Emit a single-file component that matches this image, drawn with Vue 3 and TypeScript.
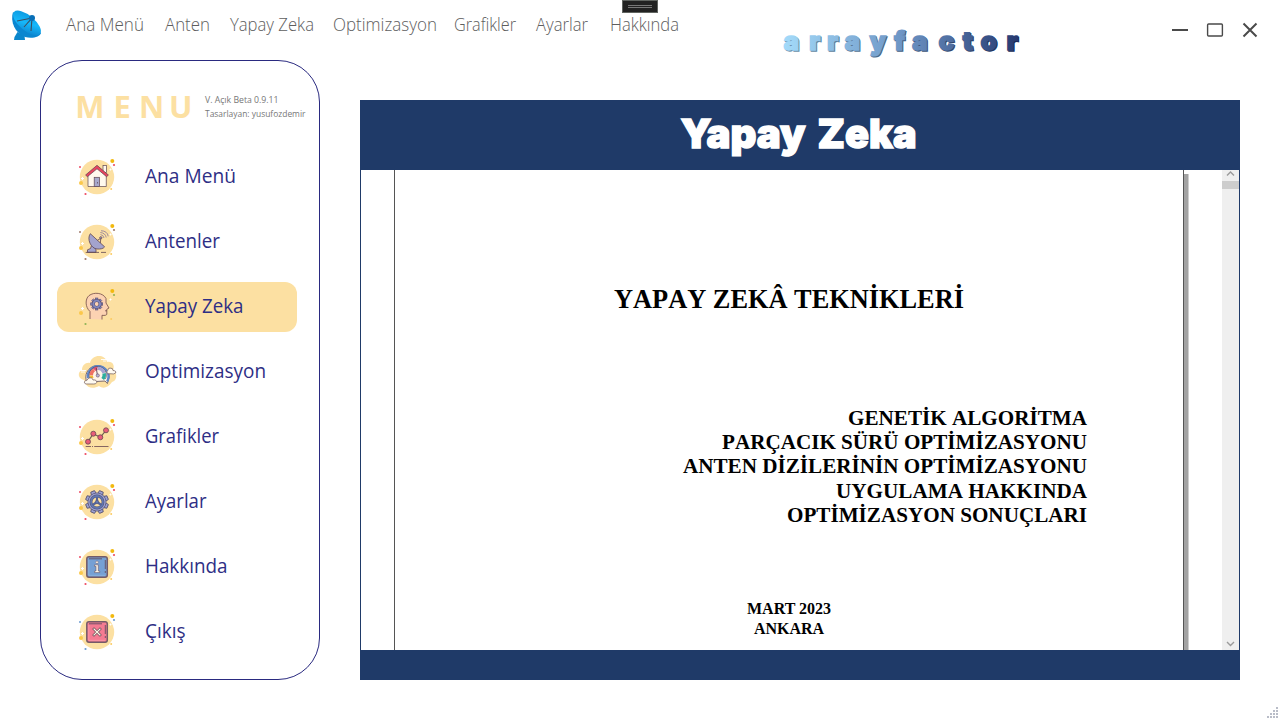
<script setup lang="ts">
interface NavItem { label: string; width: number; text: number }
interface MenuItem { label: string; icon: string; accent: string; text: number }

const nav: NavItem[] = [
  { label: 'Ana Menü', width: 99, text: 78 },
  { label: 'Anten', width: 65, text: 45 },
  { label: 'Yapay Zeka', width: 103, text: 84 },
  { label: 'Optimizasyon', width: 121, text: 104 },
  { label: 'Grafikler', width: 82.4, text: 62 },
  { label: 'Ayarlar', width: 74, text: 52 },
  { label: 'Hakkında', width: 80, text: 69 },
]

const menu: MenuItem[] = [
  { label: 'Ana Menü', icon: 'home', accent: '#ee4b63', text: 91 },
  { label: 'Antenler', icon: 'dish', accent: '#a27c6c', text: 75 },
  { label: 'Yapay Zeka', icon: 'head', accent: '#8fb355', text: 98.5 },
  { label: 'Optimizasyon', icon: 'gauge', accent: '', text: 121 },
  { label: 'Grafikler', icon: 'chart', accent: '#ee4b63', text: 74 },
  { label: 'Ayarlar', icon: 'gear', accent: '#ee4b63', text: 61.5 },
  { label: 'Hakkında', icon: 'info', accent: '#ee4b63', text: 82.5 },
  { label: 'Çıkış', icon: 'close', accent: '#6c9bd2', text: 40.5 },
]
const active = 'head'

const lines: { label: string; text: number }[] = [
  { label: 'GENETİK ALGORİTMA', text: 239 },
  { label: 'PARÇACIK SÜRÜ OPTİMİZASYONU', text: 365 },
  { label: 'ANTEN DİZİLERİNİN OPTİMİZASYONU', text: 404 },
  { label: 'UYGULAMA HAKKINDA', text: 251 },
  { label: 'OPTİMİZASYON SONUÇLARI', text: 300 },
]

const teeth = [0, 45, 90, 135, 180, 225, 270, 315]
const gripDots = [[9, 0], [6, 3], [9, 3], [3, 6], [6, 6], [9, 6], [0, 9], [3, 9], [6, 9], [9, 9]]
</script>

<template>
  <div class="window">
    <header class="topbar">
      <svg class="logo" viewBox="0 0 32 32">
        <defs>
          <linearGradient id="dishFill" x1="0" y1="0" x2="1" y2="1">
            <stop offset="0" stop-color="#0a8fd8" /><stop offset=".5" stop-color="#16b8fa" /><stop offset="1" stop-color="#0a78c4" />
          </linearGradient>
        </defs>
        <path d="M6.5 22 L3.5 27 L3 30 H14 L13.5 26Z" fill="#0a86cc" />
        <path d="M2 2 C-1 12 4 23 14 27 C21 29 29 27 30 23Z" fill="#0a86d0" />
        <ellipse cx="16" cy="13" rx="17" ry="7.6" transform="rotate(40 16 13)" fill="url(#dishFill)" />
        <path d="M6 11 L21 8 L13 17 M21 8 L20 21" fill="none" stroke="#3f4c5e" stroke-width="1.1" />
        <circle cx="21" cy="8" r="3" fill="#086fb7" />
      </svg>
      <nav class="nav">
        <span v-for="n in nav" :key="n.label" :style="{ width: n.width + 'px' }">
          <svg :width="n.width" height="30"><text x="0" y="20.5" :textLength="n.text" lengthAdjust="spacingAndGlyphs">{{ n.label }}</text></svg>
        </span>
      </nav>
      <div class="debug-tab"><i></i><i></i></div>
      <svg class="brand" viewBox="0 0 250 40" width="250" height="40">
        <defs>
          <linearGradient id="brandFill" gradientUnits="userSpaceOnUse" x1="4" y1="0" x2="240" y2="0">
            <stop offset="0" stop-color="#a3daf9" /><stop offset=".5" stop-color="#6d95c5" /><stop offset="1" stop-color="#25386f" />
          </linearGradient>
          <linearGradient id="brandEdge" gradientUnits="userSpaceOnUse" x1="4" y1="0" x2="240" y2="0">
            <stop offset="0" stop-color="#6c92ad" /><stop offset="1" stop-color="#172653" />
          </linearGradient>
        </defs>
        <text class="edge" x="4.5 30 48 65.5 90.5 115 133 159.5 183.5 201.5 227.5" y="27">arrayfactor</text>
        <text class="face" x="3.5 29 47 64.5 89.5 114 132 158.5 182.5 200.5 226.5" y="26">arrayfactor</text>
      </svg>
      <div class="controls">
        <svg viewBox="0 0 100 30" width="100" height="30" fill="none" stroke="#4a4a4a" stroke-width="2">
          <path d="M7 15 H23" />
          <rect x="42.6" y="9" width="14.8" height="12" rx="1" stroke-width="1.4" />
          <path d="M78.5 8.5 L91.5 21.5 M91.5 8.5 L78.5 21.5" />
        </svg>
      </div>
    </header>

    <main class="body">
      <aside class="sidebar">
        <div class="side-head">
          <svg class="menu-word" width="125" height="40"><text x="-0.8 37.5 63 93" y="28">MENU</text></svg>
          <svg class="version" width="112" height="30">
            <text x="0" y="9" textLength="73.5" lengthAdjust="spacingAndGlyphs">V. Açık Beta 0.9.11</text>
            <text x="0" y="23" textLength="100.5" lengthAdjust="spacingAndGlyphs">Tasarlayan: yusufozdemir</text>
          </svg>
        </div>
        <ul class="menu">
          <li v-for="m in menu" :key="m.icon" :class="{ active: m.icon === active }">
            <svg class="icon" viewBox="0 0 40 40">
              <template v-if="m.icon !== 'gauge'">
                <circle cx="20" cy="20" r="17.2" fill="#fce0a2" />
                <circle cx="35.3" cy="4" r="2" fill="#f2b90f" />
                <circle cx="4" cy="26" r="2" fill="#fbc84b" />
                <circle cx="34.2" cy="32" r="1" fill="#fbcb63" />
                <circle cx="37" cy="8" r="1.1" :fill="m.accent" />
                <circle v-if="m.icon !== 'head'" cx="3" cy="10" r="1" :fill="m.accent" />
                <circle cx="8.5" cy="37" r="1.1" :fill="m.accent" />
                <path d="M5.5 20 v3 M4 21.5 h3 M33.5 11.5 v2 M32.5 12.5 h2" stroke="#fff" />
              </template>

              <g v-if="m.icon === 'home'" stroke="#5d4550" stroke-width=".7">
                <rect x="26" y="8.5" width="3.5" height="7" fill="#fff9ee" />
                <path d="M11 18 L20 10.5 L29.3 18 V29.5 H11Z" fill="#fff9ee" />
                <path d="M8.6 18 L20 8.3 L31.4 18 L29.6 19.7 L20 11.8 L10.4 19.7Z" fill="#e84460" />
                <rect x="17.2" y="20.3" width="5.3" height="9.2" fill="#a7a9cc" />
                <path d="M20.5 25 v1.5" />
              </g>

              <g v-else-if="m.icon === 'dish'" stroke="#5e4552" stroke-width=".8" fill="#a3a3cd">
                <path d="M15 22 L13.5 26.5 L10.5 27.8 V30.3 H19 V27.8 L17.5 25.5Z" />
                <path d="M13.3 11.7 C9.5 17 14 26.5 20 27 C23.5 27.3 26.5 26.6 27.6 24.8Z" />
                <path d="M20.5 18.2 L23.8 16.4 L23.3 21" fill="none" />
                <circle cx="23.8" cy="15.8" r="1.1" />
                <path d="M23.5 12.5 Q26.5 13 27 16 M23.3 10.5 Q28.5 11 29.2 15.5 M24 8.7 Q30.5 9 31.2 14.3" fill="none" stroke="#8a789a" />
                <path d="M8.7 30.4 H22 M24 30.4 H29" fill="none" />
              </g>

              <g v-else-if="m.icon === 'head'">
                <path d="M13 32 V24.5 C8 20 8 12 12 8.6 C17 4.8 26 5.6 29 11.5 V16 L32 21 L29.8 22.3 V27.2 Q29.5 28.8 25 28.3 V32.5Z" fill="#fcd2b2" />
                <path d="M13 32 V24.5 C8 20 8 12 12 8.6 C17 4.8 26 5.6 29 11.5 V16 L32 21 L29.8 22.3 V27.2 Q29.5 28.8 25 28.3 V32.5 M28 23.8 h2" fill="none" stroke="#714a46" stroke-width=".8" />
                <g transform="translate(19.7 17)">
                  <g fill="#8187bd" stroke="#55486a" stroke-width=".6">
                    <rect v-for="a in teeth" :key="a" x="-1.2" y="-6" width="2.4" height="3" :transform="`rotate(${a})`" />
                  </g>
                  <circle r="3.4" fill="none" stroke="#55486a" stroke-width="3" />
                  <circle r="3.4" fill="none" stroke="#8187bd" stroke-width="2" />
                  <circle r="1.4" fill="#fcd2b2" />
                </g>
              </g>

              <g v-else-if="m.icon === 'gauge'">
                <path d="M7 28 C1 27 0 20 5 18 C5 13 9 10 13 11 C15 2 28 2 30 10 C36 9 38 14 36 18 C41 21 40 29 35 30 C31 36 26 37 22 34 C17 37 10 36 9 32Z" fill="#fce0a2" />
                <path d="M9.8 30 A11.7 11.7 0 1 1 32.2 25 L30.4 31.5 L28 29Z" fill="#fff5e8" stroke="#5b4b5c" stroke-width=".8" />
                <path d="M11 26 A10.3 10.3 0 1 1 30.2 29.5" fill="none" stroke="#5c87c9" stroke-width="2.4" />
                <path d="M12.7 26 A8.6 8.6 0 1 1 28.4 27" fill="none" stroke="#5b4b5c" stroke-width=".7" />
                <g fill="none" stroke-width="3.4">
                  <path d="M15 26.5 A6.5 6.5 0 0 1 14.3 23.5" stroke="#f3bd33" />
                  <path d="M14.3 23.3 A6.5 6.5 0 0 1 17 17.8" stroke="#ef7263" />
                  <path d="M17.2 17.6 A6.5 6.5 0 0 1 20.5 16.4" stroke="#e84a6a" />
                  <path d="M20.8 16.4 A6.5 6.5 0 0 1 27 21" stroke="#a5a3d1" />
                  <path d="M27.1 21.3 A6.5 6.5 0 0 1 25.7 27" stroke="#2cae9e" />
                </g>
                <path d="M20.5 24 L19.3 16" stroke="#684d65" />
                <circle cx="20.8" cy="23.5" r="1.6" fill="#b8b5d7" stroke="#684d65" stroke-width=".6" />
                <path d="M8.5 32 Q6 30 8.5 28.5 Q10.5 28.8 11 26.5 Q15 24.5 16 28 Q20 27.5 19.7 30.5 Q19 32.3 16.5 32Z M31 21.8 Q28.5 20 30.8 18.3 Q31.3 15.3 33.8 16.2 Q36 16 36 18.5 Q39.5 18.7 38.6 21 Q37 22.5 34 21.8Z" fill="#fffaf0" stroke="#6b5455" stroke-width=".7" />
                <path d="M2 18.5 h7 M4 20 h4 M24 7.5 h7 M26 9 h3" stroke="#fff" stroke-width=".9" />
              </g>

              <g v-else-if="m.icon === 'chart'" stroke="#674650" stroke-width=".8" fill="#e95c78">
                <path d="M11 24.7 L16.3 16.7 L23.3 20.3 L29 13.3" fill="none" stroke="#6d6350" stroke-width="1.2" />
                <circle cx="11" cy="24.7" r="2.5" /><circle cx="16.3" cy="16.7" r="2.5" />
                <circle cx="23.3" cy="20.3" r="2.5" /><circle cx="29" cy="13.3" r="2.5" />
                <path d="M8.7 29.5 H14 M15 29.5 H16 M17.2 29.5 H31.5" />
              </g>

              <g v-else-if="m.icon === 'gear'" transform="translate(20 20)">
                <g fill="#9a9fd1" stroke="#55506d" stroke-width=".8">
                  <path v-for="a in teeth" :key="a" d="M-2.8 -7.5 L-2 -11.5 H2 L2.8 -7.5" :transform="`rotate(${a + 22.5})`" />
                  <circle r="9" />
                </g>
                <circle r="8.5" fill="#9a9fd1" />
                <circle r="6" fill="#fce0a2" stroke="#55506d" stroke-width="2.8" />
                <circle r="6" fill="none" stroke="#6076b0" stroke-width="1.8" />
                <path d="M0 0 V-5 M0 0 L-4.4 3 M0 0 L4.4 3" stroke="#56659a" stroke-width="2.2" />
                <circle r="1.8" fill="#6076b0" stroke="#55506d" stroke-width=".5" />
              </g>

              <g v-else>
                <rect x="9.8" y="9.8" width="20.5" height="20.5" rx="2.2" :fill="m.icon === 'info' ? '#75a0d4' : '#f47b92'" stroke="#745b68" stroke-width="1.5" />
                <path d="M12 11.8 H25 M28.3 13 V22 M28.3 24 V26" fill="none" stroke="#634d61" stroke-width=".9" />
                <path d="M11.8 13 V28.3 H28" fill="none" :stroke="m.icon === 'info' ? '#8db2df' : '#fa98a9'" stroke-width=".9" />
                <template v-if="m.icon === 'info'">
                  <path d="M17.5 17.8 H21.3 V24 H22.7 V25.6 H17.5 V24 H19 V19.3 H17.5Z" fill="#fff5e5" stroke="#67576b" stroke-width=".6" />
                  <circle cx="20" cy="15.3" r="1.3" fill="#fff5e5" stroke="#67576b" stroke-width=".5" />
                </template>
                <template v-else>
                  <path d="M17 17 L23 23 M23 17 L17 23" stroke="#6b4e58" stroke-width="2.6" stroke-linecap="square" />
                  <path d="M17 17 L23 23 M23 17 L17 23" stroke="#fff5e5" stroke-width="1.2" stroke-linecap="square" />
                </template>
              </g>
            </svg>
            <svg class="label" width="135" height="30"><text x="0" y="21" :textLength="m.text" lengthAdjust="spacingAndGlyphs">{{ m.label }}</text></svg>
          </li>
        </ul>
      </aside>

      <section class="panel">
        <div class="title">
          <svg width="260" height="60">
            <text x="12.5" y="42.5" textLength="125" lengthAdjust="spacingAndGlyphs">Yapay</text>
            <text x="149.5" y="42.5" textLength="99" lengthAdjust="spacingAndGlyphs">Zeka</text>
          </svg>
        </div>
        <div class="viewer">
          <article class="page">
            <svg class="heading" width="360" height="40"><text x="5" y="29" textLength="350" lengthAdjust="spacingAndGlyphs">YAPAY ZEKÂ TEKNİKLERİ</text></svg>
            <div class="lines">
              <svg v-for="l in lines" :key="l.label" :width="l.text + 2" height="24.25"><text x="1" y="18.5" :textLength="l.text" lengthAdjust="spacingAndGlyphs">{{ l.label }}</text></svg>
            </div>
            <div class="date">MART 2023<br>ANKARA</div>
          </article>
          <div class="page-shadow"></div>
          <div class="scrollbar">
            <svg width="17" height="11"><path d="M5 5.5 L8.5 2 L12 5.5" /></svg>
            <div class="thumb"></div>
            <svg class="down" width="17" height="11"><path d="M5 3 L8.5 6.5 L12 3" /></svg>
          </div>
        </div>
      </section>
    </main>
    <svg class="grip" width="12" height="12">
      <rect v-for="(d, i) in gripDots" :key="i" :x="d[0]" :y="d[1]" width="2" height="2" fill="#b9bdc8" />
    </svg>
  </div>
</template>

<style>
body { background: #fff; overflow: hidden; }
</style>

<style scoped>
.window { position: relative; width: 1280px; height: 720px; background: #fff; font-family: "Open Sans", "Noto Sans", sans-serif; }
svg { display: block; overflow: visible; }
.topbar { display: flex; height: 60px; padding-left: 11px; box-sizing: border-box; }
.logo { width: 32px; height: 32px; margin-top: 10px; }
.nav { display: flex; margin: 10px 0 0 23px; width: 716px; }
.nav text { font-size: 18px; font-weight: 300; fill: #5e5e5e; }
.debug-tab { position: absolute; left: 622px; top: 0; width: 36px; height: 13px; box-sizing: border-box; background: #222; border: 1px solid #606460; display: flex; flex-direction: column; align-items: center; gap: 1px; padding-top: 4px; }
.debug-tab i { width: 24px; height: 1px; background: #777; }
.brand { margin: 24px 0 0 -2px; }
.brand text { font: 900 26px Inter, sans-serif; stroke-width: 1.3px; }
.face { fill: url(#brandFill); stroke: url(#brandFill); }
.edge { fill: url(#brandEdge); stroke: url(#brandEdge); }
.controls { margin: 15px 0 0 135px; }
.body { display: flex; padding-left: 40px; gap: 40px; }
.sidebar { width: 280px; height: 620px; box-sizing: border-box; border: 1px solid #2a2a80; border-radius: 42px; }
.side-head { display: flex; height: 91px; padding-left: 34.5px; box-sizing: border-box; }
.menu-word { margin-top: 29px; }
.menu-word text { font-size: 31px; font-weight: 700; fill: #fce0a2; }
.version { margin: 33px 0 0 4.5px; }
.version text { font-size: 9.3px; fill: #777; }
.menu { list-style: none; margin: 0; padding: 0 0 0 16px; display: flex; flex-direction: column; gap: 15px; }
.menu li { width: 240px; height: 50px; border-radius: 12px; display: flex; align-items: center; padding-left: 20px; box-sizing: border-box; }
.menu li.active { background: #fce0a2; }
.icon { width: 40px; height: 40px; }
.label { margin-left: 28px; }
.label text { font-size: 19.5px; fill: #2e2e85; }
.panel { width: 880px; height: 580px; margin-top: 40px; display: flex; flex-direction: column; background: #1f3a68; }
.title { height: 70px; padding: 5px 0 0 308px; box-sizing: border-box; }
.title text { font: 900 40px Inter, sans-serif; fill: #fff; stroke: #fff; stroke-width: 1.4px; }
.viewer { height: 480px; margin: 0 1px; background: #fff; display: flex; overflow: hidden; }
.page { width: 790px; height: 480px; margin-left: 33px; box-sizing: border-box; border-left: 1px solid #555; border-right: 1px solid #555; font-family: "Liberation Serif", serif; font-weight: 700; color: #000; display: flex; flex-direction: column; align-items: center; }
.heading { margin-top: 109px; }
.heading text { font-size: 26.6px; font-kerning: none; }
.lines { align-self: flex-end; margin: 86.9px 95px 0 0; display: flex; flex-direction: column; align-items: flex-end; }
.lines text { font-size: 21.3px; font-kerning: none; }
.date { margin-top: 72px; font-size: 16px; line-height: 20px; text-align: center; }
.page-shadow { width: 5px; margin-top: 4px; background: linear-gradient(90deg, #a3a3a3 80%, #cfcfcf 80%); }
.scrollbar { margin-left: auto; width: 17px; background: #efefef; display: flex; flex-direction: column; }
.scrollbar path { fill: none; stroke: #9b9b9b; stroke-width: 1.4px; }
.thumb { height: 8px; background: #cdcdcd; }
.down { margin-top: auto; }
.grip { position: absolute; left: 1267px; top: 707px; }
</style>
